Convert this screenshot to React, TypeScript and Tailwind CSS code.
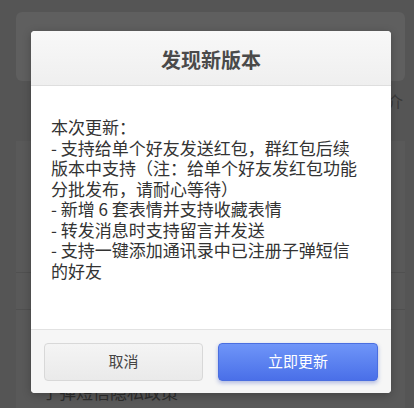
const NOTES = [
  "本次更新：",
  "- 支持给单个好友发送红包，群红包后续",
  "版本中支持（注：给单个好友发红包功能",
  "分批发布，请耐心等待）",
  "- 新增 6 套表情并支持收藏表情",
  "- 转发消息时支持留言并发送",
  "- 支持一键添加通讯录中已注册子弹短信",
  "的好友",
];

function Backdrop() {
  return (
    <div className="flex h-[408px] w-[414px] flex-col bg-[#555555] pl-[16px] pr-[9px] pt-[12px]">
      {/* dimmed page content under the dialog */}
      <div className="h-[69px] rounded-[6px] bg-[#5f5f5f]" />
      <div className="flex h-[40px] items-center justify-end pr-[2px] text-[16px] text-[#3a3a3a]">介</div>
      <div className="mt-[20px] flex flex-1 flex-col bg-[#595959]">
        <div className="h-[132px] border-b border-[#505050]" />
        <div className="h-[37px] border-b border-[#505050]" />
        <div className="flex flex-1 items-end pb-[4px] pl-[26px] text-[17px] text-[#2e2e2e]">于弹短信隐私政策</div>
      </div>
    </div>
  );
}

function UpdateDialog() {
  return (
    <div className="absolute left-[31px] top-[31px] flex h-[362px] w-[360px] flex-col overflow-hidden rounded-[4px] bg-white shadow-[0_2px_8px_rgba(0,0,0,0.25)]">
      {/* Header */}
      <div className="flex h-[55px] shrink-0 items-center justify-center border-b border-[#dedede] bg-gradient-to-b from-[#f8f8f8] to-[#efefef] pt-[3px]">
        <span className="text-[20px] font-bold text-[#4a4a4a]">发现新版本</span>
      </div>

      {/* Body */}
      <div className="flex-1 pl-[20px] pt-[31px] text-[17px] leading-[20.5px] text-[#333333]">
        {NOTES.map((line) => (
          <div key={line} className="whitespace-nowrap">
            {line}
          </div>
        ))}
      </div>

      {/* Footer */}
      <div className="flex h-[64px] shrink-0 items-center gap-[15px] border-t border-[#e2e2e2] bg-[#f6f6f6] px-[13px]">
        <button className="h-[38px] w-[159px] rounded-[4px] border border-[#d8d8d8] bg-gradient-to-b from-[#f4f4f4] to-[#eaeaea] text-[15px] text-[#444444]">
          取消
        </button>
        <button className="h-[38px] w-[160px] rounded-[4px] border border-[#4a6ee0] bg-gradient-to-b from-[#6f95f8] to-[#4a6fe8] text-[15px] text-white shadow-[0_2px_4px_rgba(40,70,180,0.35)]">
          立即更新
        </button>
      </div>
    </div>
  );
}

export default function App() {
  return (
    <div
      className="relative h-[408px] w-[414px] overflow-hidden"
      style={{ fontFamily: '"Noto Sans CJK SC", "Noto Sans", sans-serif' }}
    >
      <Backdrop />
      <UpdateDialog />
    </div>
  );
}
